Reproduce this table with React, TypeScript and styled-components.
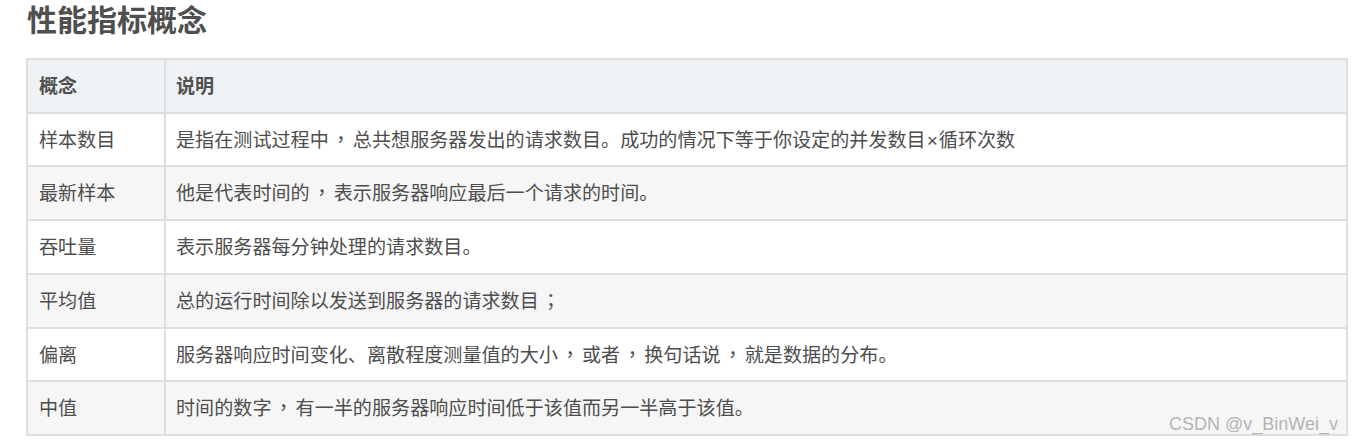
import styled, { createGlobalStyle } from "styled-components";

const GlobalStyle = createGlobalStyle`
   html, body {
      margin: 0;
      padding: 0;
      background: #ffffff;
   }
   body {
      font-family: "Noto Sans CJK SC", "Microsoft YaHei", sans-serif;
      color: #4d4d4d;
   }
`;

const Page = styled.main`
   padding: 0 5px 0 26px;
`;

const Title = styled.h2`
   margin: 0 0 21px 1px;
   font-size: 30px;
   line-height: 37px;
   font-weight: 700;
   color: #4f4f4f;
`;

const TableWrap = styled.div`
   position: relative;
   width: 1322px;
`;

const Table = styled.table`
   width: 100%;
   border-collapse: collapse;
   font-size: 19.1px;
   line-height: 31.7px;
`;

const HeadCell = styled.th<{ $first?: boolean }>`
   text-align: left;
   font-weight: 700;
   color: #4f4f4f;
   background: #eef2f5;
   border: 2px solid #dedede;
   padding: 10px ${p => (p.$first ? "11px" : "10px")};
   width: ${p => (p.$first ? "114px" : "auto")};
`;

const Row = styled.tr<{ $striped: boolean }>`
   background: ${p => (p.$striped ? "#f6f6f6" : "#ffffff")};
`;

const Cell = styled.td<{ $first?: boolean }>`
   border: 2px solid #dedede;
   padding: 10px ${p => (p.$first ? "11px" : "10px")};
   color: #4d4d4d;
   white-space: nowrap;
`;

// centred full-width punctuation, as the original renders it
const Punct = styled.span`
   font-family: "Noto Sans CJK TC", sans-serif;
   line-height: 1;
   margin: 0 2.5px;
`;

const Times = styled.span`
   font-family: "Liberation Sans", Arial, sans-serif;
   line-height: 1;
   margin: 0 1px;
`;

const Watermark = styled.span`
   position: absolute;
   right: 10px;
   bottom: 1px;
   font-family: "Liberation Sans", Arial, sans-serif;
   font-size: 18px;
   line-height: 22px;
   color: #b4b4b4;
`;

const rows = [
   ["样本数目", "是指在测试过程中，总共想服务器发出的请求数目。成功的情况下等于你设定的并发数目×循环次数"],
   ["最新样本", "他是代表时间的，表示服务器响应最后一个请求的时间。"],
   ["吞吐量", "表示服务器每分钟处理的请求数目。"],
   ["平均值", "总的运行时间除以发送到服务器的请求数目；"],
   ["偏离", "服务器响应时间变化、离散程度测量值的大小，或者，换句话说，就是数据的分布。"],
   ["中值", "时间的数字，有一半的服务器响应时间低于该值而另一半高于该值。"],
];

function renderText(text: string) {
   return text.split(/([，；×])/).map((part, i) => {
      if (part === "，" || part === "；") return <Punct key={i}>{part}</Punct>;
      if (part === "×") return <Times key={i}>×</Times>;
      return part;
   });
}

export default function App() {
   return (
      <Page>
         <GlobalStyle />
         <Title>性能指标概念</Title>
         <TableWrap>
            <Table>
               <thead>
                  <tr>
                     <HeadCell $first>概念</HeadCell>
                     <HeadCell>说明</HeadCell>
                  </tr>
               </thead>
               <tbody>
                  {rows.map(([name, desc], i) => (
                     <Row key={name} $striped={i % 2 === 1}>
                        <Cell $first>{name}</Cell>
                        <Cell>{renderText(desc)}</Cell>
                     </Row>
                  ))}
               </tbody>
            </Table>
            <Watermark>CSDN @v_BinWei_v</Watermark>
         </TableWrap>
      </Page>
   );
}
